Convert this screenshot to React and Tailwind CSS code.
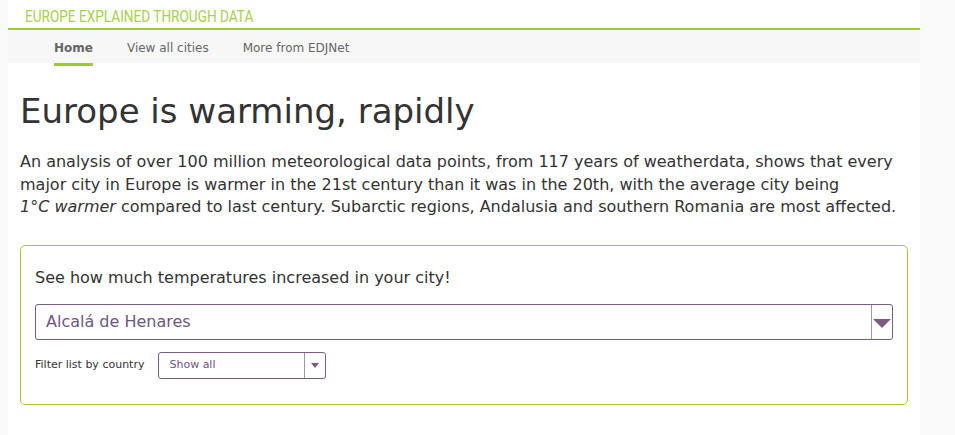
import React, { useState } from 'react';

const cities = ['Alcalá de Henares', 'Amsterdam', 'Berlin', 'Madrid'];
const countries = ['Show all', 'Spain', 'Germany', 'Netherlands'];

function App() {
  const [city, setCity] = useState(cities[0]);
  const [country, setCountry] = useState(countries[0]);

  return (
    <div className="min-h-[435px] bg-[#fafafa] font-['DejaVu_Sans',Verdana,sans-serif] text-[#333]">
      <div className="ml-[8px] w-[912px] bg-white pb-[30px]">
        <header className="h-[28px] pl-[17px] pt-[5px] overflow-hidden">
          <span className="inline-block origin-left scale-x-[0.8] font-['Roboto',sans-serif] text-[17px] leading-[18px] text-[#a6d14a]">
            EUROPE EXPLAINED THROUGH DATA
          </span>
        </header>

        <nav className="border-t-2 border-[#9bcc31] bg-[#f7f7f7] h-[35px] pl-[46px] flex gap-[34px] text-[12px] text-[#666]">
          {['Home', 'View all cities', 'More from EDJNet'].map((item, i) => (
            <a
              key={item}
              href="#"
              className={`pt-[9px] ${i === 0 ? 'font-bold text-[#666] border-b-[3px] border-[#9bcc31] h-[36px]' : ''}`}
            >
              {item}
            </a>
          ))}
        </nav>

        <div className="px-[12px]">
          <h1 className="mt-[27px] text-[34px] leading-[42px] text-[#333]">Europe is warming, rapidly</h1>

          <p className="mt-[19px] text-[16px] leading-[22.5px] whitespace-nowrap">
            An analysis of over 100 million meteorological data points, from 117 years of weatherdata, shows that every
            <br />
            major city in Europe is warmer in the 21st century than it was in the 20th, with the average city being
            <br />
            <em>1°C warmer</em> compared to last century. Subarctic regions, Andalusia and southern Romania are most affected.
          </p>

          <div className="mt-[26px] w-[888px] h-[160px] border border-[#a8c83a] rounded-[5px] px-[14px] pt-[22px]">
            <p className="text-[16px] leading-[20px]">See how much temperatures increased in your city!</p>

            <div className="mt-[16px] relative h-[36px] border border-[#7a5c85] rounded-[3px] flex">
              <select
                value={city}
                onChange={(e) => setCity(e.target.value)}
                className="appearance-none flex-1 bg-transparent pl-[10px] text-[16px] text-[#6f5680] outline-none"
              >
                {cities.map((c) => (
                  <option key={c}>{c}</option>
                ))}
              </select>
              <div className="w-[21px] border-l border-[#a393ab] flex justify-center pointer-events-none">
                <svg width="20" height="12" viewBox="0 0 20 12" className="mt-[14px]">
                  <polygon points="1,0 19,0 10,9" fill="#7a5c85" />
                </svg>
              </div>
            </div>

            <div className="mt-[12px] flex items-center">
              <span className="text-[11px] text-[#333] mr-[14px]">Filter list by country</span>
              <div className="w-[168px] h-[27px] border border-[#7a5c85] rounded-[3px] flex">
                <select
                  value={country}
                  onChange={(e) => setCountry(e.target.value)}
                  className="appearance-none flex-1 bg-transparent pl-[10px] text-[11px] text-[#6f5680] outline-none"
                >
                  {countries.map((c) => (
                    <option key={c}>{c}</option>
                  ))}
                </select>
                <div className="w-[21px] border-l border-[#a393ab] flex items-center justify-center pointer-events-none">
                  <svg width="8" height="5" viewBox="0 0 8 5">
                    <polygon points="0,0 8,0 4,5" fill="#7a5c85" />
                  </svg>
                </div>
              </div>
            </div>
          </div>
        </div>
      </div>
    </div>
  );
}

export default App;
